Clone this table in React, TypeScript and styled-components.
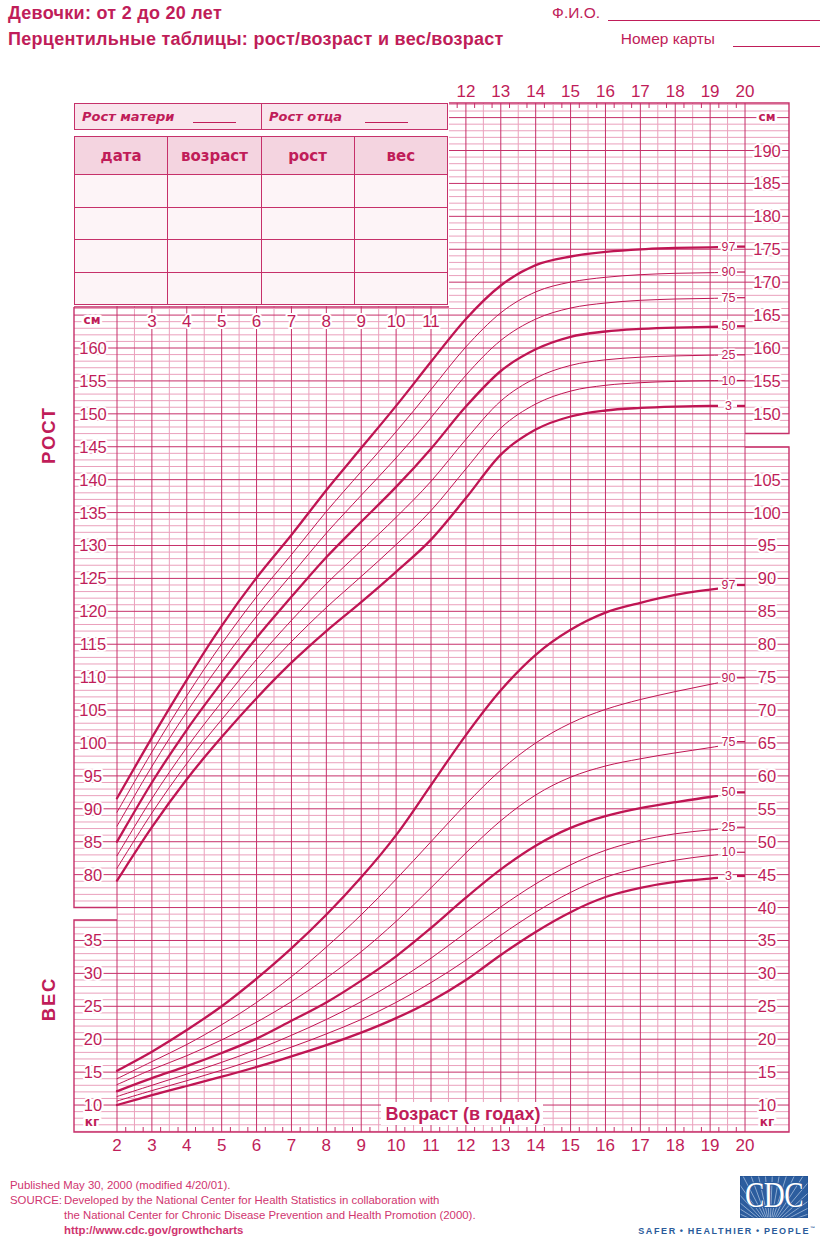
import React from "react";
import styled, { createGlobalStyle } from "styled-components";

const MAIN = "#c01d59";
const LINE = "#c6306a";
const MINOR = "#eaa0bc";
const FOOT = "#d0356f";
const BLUE = "#2a5b9b";

const U = 6.583;
const yH = (h: number) => 348 + (160 - h) * U;
const yW = (w: number) => yH(w + 35);
const ax = (a: number) => 117 + (a - 2) * 34.89;

const GL = 74;
const GR = ax(20);
const SR = 789;
const GT = 103;
const GB = 1132;
const CURVE_END = 718;

type Pct = { p: number; thick: boolean; v: number[] };

const H97 = [91.6, 100.8, 109.6, 117.8, 125.1, 131.6, 138.4, 144.8, 151.2, 157.9, 164.4, 169.5, 172.6, 173.9, 174.6, 175.0, 175.2, 175.3, 175.4];
const H50 = [85.0, 94.0, 102.0, 109.2, 116.0, 122.2, 128.2, 133.6, 138.9, 144.7, 151.1, 156.5, 159.8, 161.7, 162.5, 162.9, 163.1, 163.2, 163.3];
const H03 = [79.1, 87.2, 94.5, 100.9, 106.8, 112.2, 117.0, 121.4, 126.0, 130.9, 137.2, 143.8, 147.6, 149.6, 150.5, 150.9, 151.1, 151.2, 151.2];

const up = (k: number) => H50.map((m, i) => +(m + k * (H97[i] - m)).toFixed(2));
const down = (k: number) => H50.map((m, i) => +(m - k * (m - H03[i])).toFixed(2));

const HEIGHT: Pct[] = [
  { p: 97, thick: true, v: H97 },
  { p: 90, thick: false, v: up(0.681) },
  { p: 75, thick: false, v: up(0.3585) },
  { p: 50, thick: true, v: H50 },
  { p: 25, thick: false, v: down(0.3585) },
  { p: 10, thick: false, v: down(0.681) },
  { p: 3, thick: true, v: H03 },
];

const WEIGHT: Pct[] = [
  { p: 97, thick: true, v: [15.2, 18.1, 21.4, 25.0, 29.2, 33.8, 38.9, 44.6, 51.0, 58.6, 66.2, 73.0, 78.4, 82.2, 84.8, 86.3, 87.5, 88.3, 89.0] },
  { p: 90, thick: false, v: [14.0, 16.6, 19.2, 22.2, 25.6, 29.5, 34.0, 38.9, 44.3, 50.0, 55.7, 60.9, 65.0, 68.0, 70.1, 71.6, 72.8, 73.9, 74.9] },
  { p: 75, thick: false, v: [13.1, 15.4, 17.5, 19.9, 22.6, 25.7, 29.3, 33.3, 37.9, 43.0, 48.3, 53.2, 57.1, 59.8, 61.5, 62.6, 63.5, 64.3, 65.2] },
  { p: 50, thick: true, v: [12.1, 14.1, 15.9, 17.9, 20.1, 22.8, 25.6, 28.9, 32.6, 36.9, 41.5, 45.8, 49.4, 52.1, 53.9, 55.1, 56.0, 56.8, 57.5] },
  { p: 25, thick: false, v: [11.3, 13.0, 14.7, 16.5, 18.4, 20.6, 23.0, 25.7, 28.8, 32.3, 36.2, 40.1, 43.6, 46.5, 48.7, 50.2, 51.2, 51.8, 52.2] },
  { p: 10, thick: false, v: [10.6, 12.2, 13.7, 15.3, 17.0, 18.8, 20.8, 23.0, 25.6, 28.6, 32.0, 35.8, 39.3, 42.3, 44.6, 46.1, 47.2, 47.9, 48.4] },
  { p: 3, thick: true, v: [10.0, 11.5, 12.9, 14.3, 15.8, 17.4, 19.1, 21.0, 23.2, 25.8, 29.0, 32.8, 36.3, 39.3, 41.6, 43.0, 43.9, 44.4, 44.8] },
];

function smoothPath(vals: number[], toY: (n: number) => number): string {
  const pts = vals.map((v, i) => [ax(2 + i), toY(v)] as [number, number]);
  let d = `M${pts[0][0].toFixed(1)},${pts[0][1].toFixed(1)}`;
  for (let i = 0; i < pts.length - 1; i++) {
    const p0 = pts[i - 1] || pts[i];
    const p1 = pts[i];
    const p2 = pts[i + 1];
    const p3 = pts[i + 2] || p2;
    const c1x = p1[0] + (p2[0] - p0[0]) / 6;
    const c1y = p1[1] + (p2[1] - p0[1]) / 6;
    const c2x = p2[0] - (p3[0] - p1[0]) / 6;
    const c2y = p2[1] - (p3[1] - p1[1]) / 6;
    d += ` C${c1x.toFixed(1)},${c1y.toFixed(1)} ${c2x.toFixed(1)},${c2y.toFixed(1)} ${p2[0].toFixed(1)},${p2[1].toFixed(1)}`;
  }
  return d;
}

const GlobalStyle = createGlobalStyle`
  html, body { margin: 0; padding: 0; background: #ffffff; }
  #root { width: 827px; }
`;

const Page = styled.div`
  width: 827px;
  height: 1238px;
  overflow: hidden;
  background: #fff;
  display: flex;
  flex-direction: column;
`;

const Header = styled.header`
  display: flex;
  justify-content: space-between;
  height: 70px;
  flex: none;
  padding: 0 7px 0 8px;
  box-sizing: border-box;
  color: ${MAIN};
`;

const Titles = styled.div`
  display: flex;
  flex-direction: column;
`;

const Title = styled.h1`
  margin: 0;
  font: bold 18px/26px "Liberation Sans", Arial, sans-serif;
  letter-spacing: 0.28px;
  color: ${MAIN};
`;

const Fields = styled.div`
  display: flex;
  flex-direction: column;
  align-items: flex-end;
  font: 15.5px/26px "Liberation Sans", Arial, sans-serif;
  color: ${MAIN};
`;

const Field = styled.div`
  display: flex;
  align-items: baseline;
`;

const Blank = styled.span<{ $w: number; $gap: number }>`
  display: inline-block;
  width: ${(p) => p.$w}px;
  margin-left: ${(p) => p.$gap}px;
  border-bottom: 1.5px solid ${MAIN};
  transform: translateY(3px);
`;

const ChartArea = styled.div`
  position: relative;
  height: 1090px;
  flex: none;
`;

const ChartSvg = styled.svg`
  display: block;
`;

const TableOverlay = styled.div`
  position: absolute;
  left: 70px;
  top: 30px;
  width: 379px;
  height: 206px;
  background: #fff;
  padding: 3px 0 0 4px;
  box-sizing: border-box;
  display: flex;
  flex-direction: column;
  gap: 6px;
`;

const ParentsRow = styled.div`
  width: 374px;
  height: 27px;
  box-sizing: border-box;
  display: grid;
  grid-template-columns: 1fr 1fr;
  border: 1.5px solid ${LINE};
  background: #f9e4ec;
`;

const ParentCell = styled.div<{ $divider?: boolean }>`
  display: flex;
  align-items: center;
  padding-left: 7px;
  border-left: ${(p) => (p.$divider ? `1.5px solid ${LINE}` : "none")};
  font: italic bold 13px "DejaVu Sans", Verdana, sans-serif;
  color: ${MAIN};
`;

const ParentBlank = styled.span<{ $gap: number }>`
  display: inline-block;
  width: 43px;
  height: 11px;
  margin-left: ${(p) => p.$gap}px;
  border-bottom: 1.5px solid ${MAIN};
`;

const DataTable = styled.table`
  width: 374px;
  border-collapse: collapse;
  table-layout: fixed;
`;

const HeadCell = styled.th`
  height: 37px;
  padding: 0;
  border: 1.5px solid ${LINE};
  background: #f4d4e0;
  font: bold 15px "DejaVu Sans", Verdana, sans-serif;
  color: ${MAIN};
  text-align: center;
`;

const BodyCell = styled.td`
  height: 31.5px;
  padding: 0;
  border: 1.5px solid ${LINE};
  background: #fdf4f7;
`;

const Footer = styled.footer`
  display: flex;
  justify-content: space-between;
  align-items: flex-start;
  flex: 1;
  padding: 18px 12px 0 10px;
  box-sizing: border-box;
`;

const FootText = styled.div`
  font: 11.4px/15px "Liberation Sans", Arial, sans-serif;
  color: ${FOOT};
`;

const SourceRow = styled.div`
  display: grid;
  grid-template-columns: 54px auto;
`;

const Url = styled.div`
  font-weight: bold;
`;

const LogoBlock = styled.div`
  display: flex;
  flex-direction: column;
  align-items: flex-end;
  margin-top: -2px;
`;

const LogoBox = styled.svg`
  display: block;
  margin-right: 7px;
`;

const Tagline = styled.div`
  margin-top: 5px;
  font: bold 9px/10px "Liberation Sans", Arial, sans-serif;
  letter-spacing: 1.6px;
  word-spacing: -1px;
  color: ${BLUE};
  white-space: nowrap;
`;

const Tm = styled.sup`
  font-size: 5px;
  letter-spacing: 0;
`;

/* SVG text parts */
const halo = `
  paint-order: stroke;
  stroke: #ffffff;
  stroke-linejoin: round;
`;

const AxisNum = styled.text`
  font-family: "Liberation Sans", Arial, sans-serif;
  font-size: 16.5px;
  fill: ${MAIN};
  text-anchor: middle;
  dominant-baseline: central;
  ${halo}
  stroke-width: 4px;
`;

const AgeNum = styled.text`
  font-family: "Liberation Sans", Arial, sans-serif;
  font-size: 17px;
  fill: ${MAIN};
  text-anchor: middle;
  dominant-baseline: central;
  ${halo}
  stroke-width: 4px;
`;

const UnitText = styled.text`
  font-family: "DejaVu Sans", Verdana, sans-serif;
  font-weight: bold;
  font-size: 12px;
  fill: ${MAIN};
  text-anchor: middle;
  dominant-baseline: central;
  ${halo}
  stroke-width: 5px;
`;

const PctText = styled.text`
  font-family: "Liberation Sans", Arial, sans-serif;
  font-size: 12.5px;
  fill: ${MAIN};
  text-anchor: middle;
  dominant-baseline: central;
  ${halo}
  stroke-width: 3px;
`;

const SideTitle = styled.text`
  font-family: "Liberation Sans", Arial, sans-serif;
  font-weight: bold;
  font-size: 18.5px;
  letter-spacing: 1.8px;
  fill: ${MAIN};
  text-anchor: middle;
  dominant-baseline: central;
`;

const AxisTitle = styled.text`
  font-family: "Liberation Sans", Arial, sans-serif;
  font-weight: bold;
  font-size: 18px;
  fill: ${MAIN};
  text-anchor: middle;
  dominant-baseline: central;
`;

function Grid() {
  const hMinor: number[] = [];
  const hMajor: number[] = [];
  for (let h = 198; h >= 40; h--) {
    const y = yH(h);
    if (y < GT + 0.5 || y > GB - 0.5) continue;
    (h % 5 === 0 ? hMajor : hMinor).push(y);
  }
  const vMinor: number[] = [];
  const vMajor: number[] = [];
  for (let i = 0; i <= 36; i++) {
    const x = ax(2 + i / 2);
    (i % 2 === 0 ? vMajor : vMinor).push(x);
  }
  const ticks: number[] = [];
  for (let q = 0; q <= 72; q++) {
    if (q % 2 !== 0) ticks.push(ax(2 + q / 4));
  }
  return (
    <g>
      <g stroke={MINOR} strokeWidth={1}>
        {hMinor.map((y) => (
          <line key={`hm${y}`} x1={GL} x2={SR} y1={y} y2={y} />
        ))}
        {vMinor.map((x) => (
          <line key={`vm${x}`} x1={x} x2={x} y1={GT} y2={GB} />
        ))}
      </g>
      <g stroke={LINE} strokeWidth={1}>
        {hMajor.map((y) => (
          <line key={`hM${y}`} x1={GL} x2={SR} y1={y} y2={y} />
        ))}
        {vMajor.map((x) => (
          <line key={`vM${x}`} x1={x} x2={x} y1={GT} y2={GB} />
        ))}
        {ticks.map((x) => (
          <line key={`tb${x}`} x1={x} x2={x} y1={GB} y2={GB - 5} />
        ))}
        {ticks
          .filter((x) => x > 450)
          .map((x) => (
            <line key={`tt${x}`} x1={x} x2={x} y1={GT} y2={GT + 5} />
          ))}
      </g>
      {/* gaps between height and weight strips */}
      <rect x={60} y={907.6} width={56.5} height={12} fill="#fff" />
      <rect x={GR + 0.6} y={433.6} width={50} height={13} fill="#fff" />
      <g stroke={LINE} strokeWidth={1.4} fill="none">
        <polyline points={`${GL},307 ${GL},907.5 ${ax(2)},907.5`} />
        <polyline points={`${ax(2)},920 ${GL},920 ${GL},${GB} ${SR},${GB} ${SR},447 ${GR},447`} />
        <polyline points={`${GR},433.5 ${SR},433.5 ${SR},${GT} 448,${GT} 448,307 ${GL},307`} />
      </g>
    </g>
  );
}

function Curves() {
  const items = [
    ...HEIGHT.map((c) => ({ c, y: yH(c.v[18]) })),
    ...WEIGHT.map((c) => ({ c, y: yW(c.v[18]) })),
  ];
  return (
    <g>
      <defs>
        <clipPath id="curveClip">
          <rect x={100} y={100} width={CURVE_END - 100} height={1040} />
        </clipPath>
      </defs>
      <g clipPath="url(#curveClip)" fill="none" stroke="#bf1553" strokeLinecap="round">
        {HEIGHT.map((c) => (
          <path key={`h${c.p}`} d={smoothPath(c.v, yH)} strokeWidth={c.thick ? 2.3 : 1} />
        ))}
        {WEIGHT.map((c) => (
          <path key={`w${c.p}`} d={smoothPath(c.v, yW)} strokeWidth={c.thick ? 2.3 : 1} />
        ))}
      </g>
      {items.map(({ c, y }, i) => (
        <g key={`lab${i}`}>
          <line x1={737} x2={745} y1={y} y2={y} stroke="#bf1553" strokeWidth={c.thick ? 2.3 : 1.2} />
          <PctText x={728.5} y={y}>
            {c.p}
          </PctText>
        </g>
      ))}
    </g>
  );
}

function Labels() {
  const leftH: number[] = [];
  for (let h = 80; h <= 160; h += 5) leftH.push(h);
  const rightH: number[] = [];
  for (let h = 150; h <= 190; h += 5) rightH.push(h);
  const leftW: number[] = [];
  for (let w = 10; w <= 35; w += 5) leftW.push(w);
  const rightW: number[] = [];
  for (let w = 10; w <= 105; w += 5) rightW.push(w);
  const topAges = [12, 13, 14, 15, 16, 17, 18, 19, 20];
  const innerAges = [3, 4, 5, 6, 7, 8, 9, 10, 11];
  const bottomAges: number[] = [];
  for (let a = 2; a <= 20; a++) bottomAges.push(a);
  return (
    <g>
      {leftH.map((h) => (
        <AxisNum key={`lh${h}`} x={93} y={yH(h)}>
          {h}
        </AxisNum>
      ))}
      {leftW.map((w) => (
        <AxisNum key={`lw${w}`} x={93} y={yW(w)}>
          {w}
        </AxisNum>
      ))}
      {rightH.map((h) => (
        <AxisNum key={`rh${h}`} x={767} y={yH(h)}>
          {h}
        </AxisNum>
      ))}
      {rightW.map((w) => (
        <AxisNum key={`rw${w}`} x={767} y={yW(w)}>
          {w}
        </AxisNum>
      ))}
      <UnitText x={92} y={320}>
        см
      </UnitText>
      <UnitText x={767} y={117}>
        см
      </UnitText>
      <UnitText x={92} y={1122}>
        кг
      </UnitText>
      <UnitText x={767} y={1122}>
        кг
      </UnitText>
      {innerAges.map((a) => (
        <AgeNum key={`ia${a}`} x={ax(a)} y={321}>
          {a}
        </AgeNum>
      ))}
      {topAges.map((a) => (
        <AgeNum key={`ta${a}`} x={ax(a)} y={91}>
          {a}
        </AgeNum>
      ))}
      {bottomAges.map((a) => (
        <AgeNum key={`ba${a}`} x={ax(a)} y={1145}>
          {a}
        </AgeNum>
      ))}
      <SideTitle transform="translate(48 435) rotate(-90)">РОСТ</SideTitle>
      <SideTitle transform="translate(48 999) rotate(-90)">ВЕС</SideTitle>
      <rect x={381} y={1102} width={162} height={23} fill="#fff" />
      <AxisTitle x={463} y={1113.5}>
        Возраст (в годах)
      </AxisTitle>
    </g>
  );
}

function CdcLogo() {
  const rays: number[] = [];
  for (let i = 0; i < 22; i++) rays.push(-170 + i * 7.5);
  return (
    <LogoBox width={68} height={42} viewBox="0 0 68 42">
      <defs>
        <clipPath id="logoClip">
          <rect x={0} y={0} width={68} height={42} />
        </clipPath>
      </defs>
      <rect x={0} y={0} width={68} height={42} fill="#2c5d9e" />
      <g clipPath="url(#logoClip)" stroke="#a9c1e0" strokeWidth={0.9} opacity={0.85}>
        {rays.map((deg) => {
          const r = (deg * Math.PI) / 180;
          return <line key={deg} x1={30} y1={52} x2={30 + Math.cos(r) * 80} y2={52 + Math.sin(r) * 80} />;
        })}
      </g>
      <rect x={0} y={0} width={68} height={42} fill="none" stroke="#1f4f8f" strokeWidth={1} />
      <text
        x={34}
        y={24.6}
        transform="scale(1 1.25)"
        textAnchor="middle"
        fontFamily='"Liberation Serif", "Times New Roman", serif'
        fontSize={29}
        letterSpacing={-0.5}
        fill="#ffffff"
        stroke="#2c5d9e"
        strokeWidth={1.4}
        paintOrder="stroke"
      >
        CDC
      </text>
    </LogoBox>
  );
}

export default function App() {
  return (
    <Page>
      <GlobalStyle />
      <Header>
        <Titles>
          <Title>Девочки: от 2 до 20 лет</Title>
          <Title>Перцентильные таблицы: рост/возраст и вес/возраст</Title>
        </Titles>
        <Fields>
          <Field>
            Ф.И.О.
            <Blank $w={212} $gap={8} />
          </Field>
          <Field>
            Номер карты
            <Blank $w={87} $gap={18} />
          </Field>
        </Fields>
      </Header>
      <ChartArea>
        <ChartSvg width={827} height={1090} viewBox="0 70 827 1090">
          <Grid />
          <Curves />
          <Labels />
        </ChartSvg>
        <TableOverlay>
          <ParentsRow>
            <ParentCell>
              Рост матери
              <ParentBlank $gap={19} />
            </ParentCell>
            <ParentCell $divider>
              Рост отца
              <ParentBlank $gap={23} />
            </ParentCell>
          </ParentsRow>
          <DataTable>
            <thead>
              <tr>
                <HeadCell>дата</HeadCell>
                <HeadCell>возраст</HeadCell>
                <HeadCell>рост</HeadCell>
                <HeadCell>вес</HeadCell>
              </tr>
            </thead>
            <tbody>
              {[0, 1, 2, 3].map((r) => (
                <tr key={r}>
                  <BodyCell />
                  <BodyCell />
                  <BodyCell />
                  <BodyCell />
                </tr>
              ))}
            </tbody>
          </DataTable>
        </TableOverlay>
      </ChartArea>
      <Footer>
        <FootText>
          <div>Published May 30, 2000 (modified 4/20/01).</div>
          <SourceRow>
            <span>SOURCE:</span>
            <div>
              <div>Developed by the National Center for Health Statistics in collaboration with</div>
              <div>the National Center for Chronic Disease Prevention and Health Promotion (2000).</div>
              <Url>http://www.cdc.gov/growthcharts</Url>
            </div>
          </SourceRow>
        </FootText>
        <LogoBlock>
          <CdcLogo />
          <Tagline>
            SAFER • HEALTHIER • PEOPLE<Tm>™</Tm>
          </Tagline>
        </LogoBlock>
      </Footer>
    </Page>
  );
}
